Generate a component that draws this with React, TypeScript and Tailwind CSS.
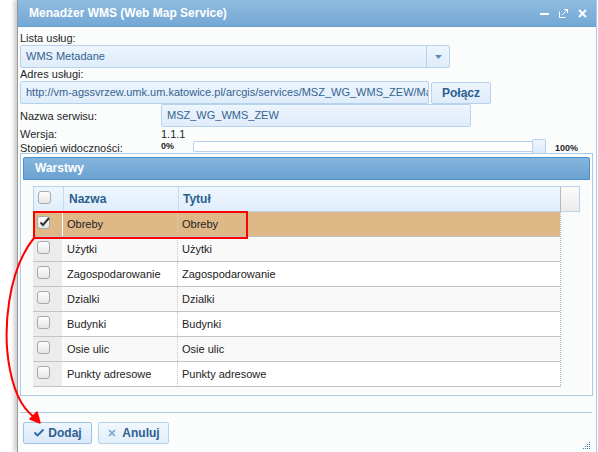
import { Check, X } from 'lucide-react';

const layers = [
  'Obreby',
  'Użytki',
  'Zagospodarowanie',
  'Dzialki',
  'Budynki',
  'Osie ulic',
  'Punkty adresowe',
];

function Box({ checked }: { checked?: boolean }) {
  return (
    <span className="relative block w-[13px] h-[13px] rounded-[3px] border border-[#a8a8a8] bg-gradient-to-b from-[#fdfdfd] to-[#e6e6e6]">
      {checked && (
        <svg width="12" height="12" viewBox="0 0 12 12" className="absolute left-[1px] -top-[1px]">
          <path d="M1.5 6.5 L4 9 L10 2" fill="none" stroke="#333" strokeWidth="2" />
        </svg>
      )}
    </span>
  );
}

function TitleIcons() {
  return (
    <div className="flex items-center gap-[10px] pr-[9px]">
      <svg width="9" height="9" viewBox="0 0 9 9">
        <rect x="0" y="4" width="9" height="2" fill="#fff" />
      </svg>
      <svg width="9" height="9" viewBox="0 0 9 9" fill="none" stroke="#fff" strokeWidth="1">
        <path d="M0.5 2.5 V8.5 H6.5" />
        <path d="M3 6 L8.5 0.5 M5 0.5 H8.5 V4" />
      </svg>
      <svg width="9" height="9" viewBox="0 0 9 9" stroke="#fff" strokeWidth="2">
        <path d="M1 1 L8 8 M8 1 L1 8" />
      </svg>
    </div>
  );
}

export default function App() {
  return (
    <div className="relative w-[598px] h-[452px] overflow-hidden bg-white font-['Liberation_Sans',Arial,sans-serif] text-[11px] text-[#1f1f1f]">
      {/* Window */}
      <div className="ml-[17px] w-[580px] h-[452px] flex flex-col border-l border-[#9a9a9a] border-r border-r-[#a9cbe8] bg-[#fbfdfd] shadow-[-3px_0_4px_rgba(0,0,0,0.2)]">
        {/* Title bar */}
        <div className="h-[27px] shrink-0 flex items-center justify-between bg-gradient-to-b from-[#8fbbe0] to-[#74a8d5] border-b border-[#6aa0cf]">
          <span className="pl-[11px] text-[12px] font-bold text-white">Menadżer WMS (Web Map Service)</span>
          <TitleIcons />
        </div>

        <div className="flex-1 flex flex-col pl-[2px] pr-[4px]">
          {/* Service list */}
          <div className="h-[18px] pt-[4px] leading-[14px]">Lista usług:</div>
          <div className="w-[430px] h-[23px] flex border border-[#b7d2ec] rounded-[2px] bg-gradient-to-b from-[#edf5fd] to-[#dfecfa]">
            <span className="flex-1 pl-[5px] leading-[21px] text-[#34638f]">WMS Metadane</span>
            <span className="w-[23px] flex items-center justify-center border-l border-[#b7d2ec]">
              <svg width="7" height="4" viewBox="0 0 7 4"><path d="M0 0 H7 L3.5 4 Z" fill="#5d8bb8" /></svg>
            </span>
          </div>

          {/* Address */}
          <div className="h-[13px] leading-[13px]">Adres usługi:</div>
          <div className="flex gap-[2px] h-[23px]">
            <div className="w-[409px] border border-[#b7d2ec] rounded-[2px] bg-gradient-to-b from-[#edf5fd] to-[#dfecfa] pl-[5px] leading-[21px] text-[#34638f] overflow-hidden whitespace-nowrap">
              http://vm-agssvrzew.umk.um.katowice.pl/arcgis/services/MSZ_WG_WMS_ZEW/Map
            </div>
            <button className="w-[60px] h-[22px] mt-[1px] border border-[#b7d2ec] rounded-[2px] bg-gradient-to-b from-[#eef6fe] to-[#deebf9] font-bold text-[12px] text-[#2d5f8f]">
              Połącz
            </button>
          </div>

          {/* Service name */}
          <div className="flex h-[23px]">
            <span className="w-[141px] pt-[5px] leading-[14px]">Nazwa serwisu:</span>
            <div className="w-[310px] border border-[#b7d2ec] rounded-[2px] bg-gradient-to-b from-[#edf5fd] to-[#dfecfa] pl-[5px] leading-[21px] text-[#34638f]">
              MSZ_WG_WMS_ZEW
            </div>
          </div>

          {/* Version */}
          <div className="flex h-[12px] leading-[12px] mt-[1px]">
            <span className="w-[141px]">Wersja:</span>
            <span>1.1.1</span>
          </div>

          {/* Visibility */}
          <div className="flex h-[13px] items-start">
            <span className="w-[141px] leading-[14px] pt-[1px]">Stopień widoczności:</span>
            <span className="w-[32px] text-[9px] font-bold leading-[10px] pt-[1px]">0%</span>
            <div className="relative w-[342px] h-[11px] mt-[1px] border border-[#b7d2ec] rounded-[2px] bg-white">
              <span className="absolute -right-[12px] -top-[3px] w-[14px] h-[15px] rounded-[2px] border border-[#b7d2ec] bg-gradient-to-b from-[#eef6fe] to-[#dbe9f8]" />
            </div>
            <span className="ml-[20px] text-[9px] font-bold leading-[10px] pt-[3px]">100%</span>
          </div>

          {/* Layers panel */}
          <div className="w-[573px] h-[243px] flex flex-col border border-[#a9cbe8] bg-white pt-[3px] px-[2px] pb-[2px]">
            <div className="h-[23px] shrink-0 rounded-t-[2px] border border-[#4a8fce] bg-gradient-to-b from-[#86b5dd] to-[#6aa2d1] pl-[11px] leading-[21px] text-[12px] font-bold text-white">
              Warstwy
            </div>
            <div className="flex-1 bg-[#fafcfc] pl-[10px] pt-[6px]">
              <div className="w-[547px]">
                {/* Header */}
                <div className="flex h-[26px] border border-[#b9d3ea] bg-gradient-to-b from-[#eef6fe] to-[#e0eefb]">
                  <div className="w-[30px] flex pl-[4px] pt-[4px] border-r border-[#c5dbef]">
                    <Box />
                  </div>
                  <div className="w-[115px] pl-[5px] leading-[24px] font-bold text-[12px] text-[#2c5f90] border-r border-[#c5dbef]">Nazwa</div>
                  <div className="flex-1 pl-[4px] leading-[24px] font-bold text-[12px] text-[#2c5f90]">Tytuł</div>
                  <div className="w-[19px] border-l border-[#b9b9b9] bg-gradient-to-b from-[#fbfbfb] to-[#ececec]" />
                </div>
                {/* Rows */}
                <div className="w-[528px] border-r border-dotted border-[#b0b0b0]">
                  {layers.map((name, i) => (
                    <div
                      key={name}
                      className={`flex h-[25px] border-b border-[#c3c3c3] ${i === 0 ? 'bg-[#dfb887]' : i % 2 === 1 ? 'bg-[#f9f9f9]' : 'bg-white'}`}
                    >
                      <div className={`w-[30px] pl-[4px] pt-[4px] border-r border-white ${i === 0 ? 'bg-[#dfb887]' : 'bg-[#ececec]'}`}>
                        <Box checked={i === 0} />
                      </div>
                      <div className="w-[115px] pl-[4px] leading-[24px] text-[#222] border-r border-dotted border-[#c8c8c8]">{name}</div>
                      <div className="flex-1 pl-[4px] leading-[24px] text-[#222]">{name}</div>
                    </div>
                  ))}
                </div>
              </div>
            </div>
          </div>

          {/* Footer */}
          <div className="mt-[16px] border-t border-[#a9cbe8] flex-1 relative flex gap-[6px] pt-[9px] pl-[3px]">
            <button className="w-[69px] h-[22px] flex items-center justify-center gap-[3px] border border-[#9fc3e6] rounded-[2px] bg-gradient-to-b from-[#eef6fe] to-[#d9e8f8] font-bold text-[12px] text-[#2d5f8f]">
              <Check size={12} strokeWidth={4} className="text-[#2f6fb0]" />
              Dodaj
            </button>
            <button className="w-[71px] h-[22px] flex items-center justify-center gap-[5px] border border-[#b7d2ec] rounded-[2px] bg-gradient-to-b from-[#f1f8fe] to-[#e2eefa] font-bold text-[12px] text-[#2d5f8f]">
              <X size={10} strokeWidth={4} className="text-[#7aa6d2]" />
              Anuluj
            </button>
            <svg width="8" height="8" viewBox="0 0 8 8" className="absolute right-[1px] bottom-[2px]">
              {[0, 1, 2, 3].map((r) =>
                [0, 1, 2, 3].filter((c) => c + r >= 3).map((c) => (
                  <rect key={`${r}-${c}`} x={c * 2} y={r * 2} width="1" height="1" fill="#3a7cc4" />
                ))
              )}
            </svg>
          </div>
        </div>
      </div>

      {/* Red annotation */}
      <div className="absolute left-[33px] top-[211px] w-[215px] h-[28px] border-2 border-[#ff0000]" />
      <svg className="absolute left-0 top-0" width="598" height="452" viewBox="0 0 598 452">
        <path d="M34 238 C 8 270, 2 330, 10 370 C 16 400, 26 412, 38 420" fill="none" stroke="#ff0000" strokeWidth="2" />
        <path d="M40 423 L30 419 L37 412 Z" fill="#ff0000" stroke="#ff0000" strokeWidth="1.5" strokeLinejoin="round" />
      </svg>
    </div>
  );
}
